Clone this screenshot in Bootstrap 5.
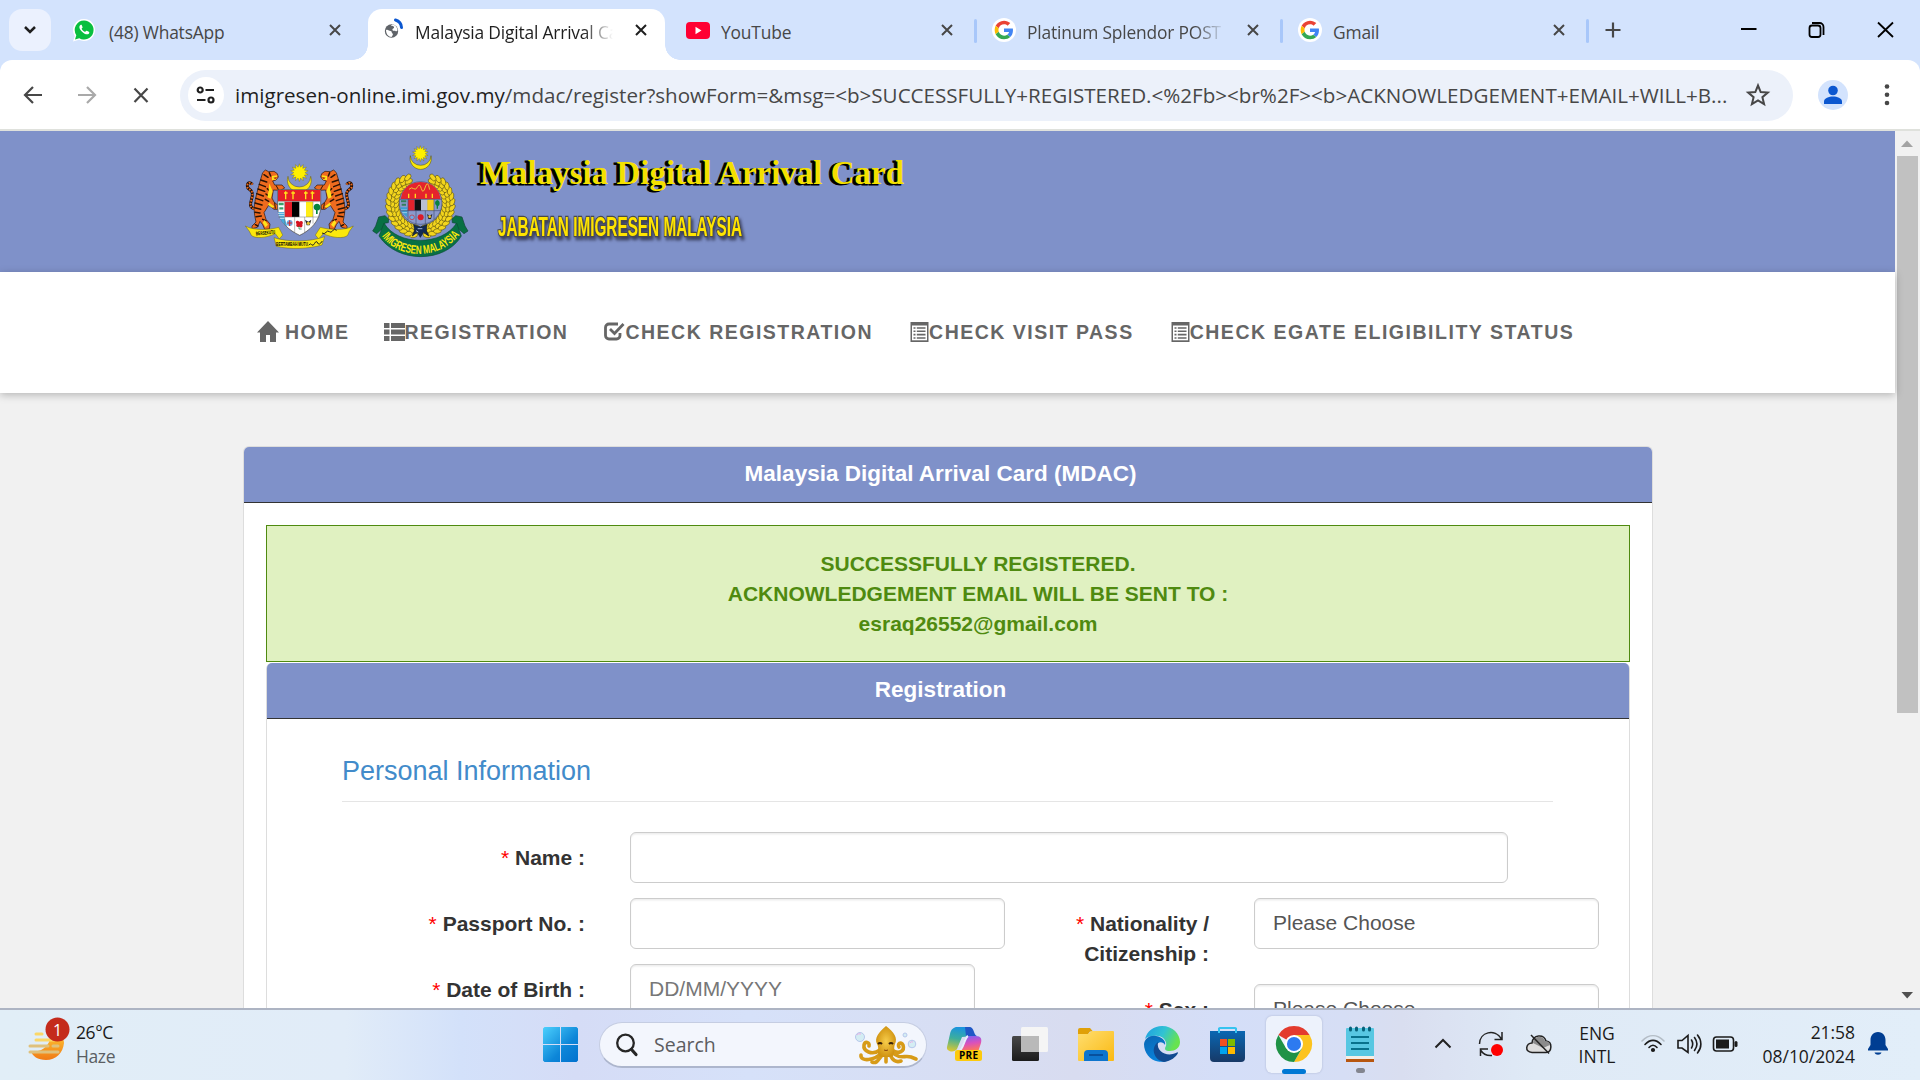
<!DOCTYPE html>
<html lang="en">
<head>
<meta charset="utf-8">
<title>Malaysia Digital Arrival Card</title>
<link href="https://cdn.jsdelivr.net/npm/bootstrap@5.3.0/dist/css/bootstrap.min.css" rel="stylesheet">
<style>
html,body{width:1920px;height:1080px;overflow:hidden;margin:0}
svg{display:block;flex:none;overflow:visible}
.ui{font-family:"Open Sans","Noto Sans",sans-serif}
.strip{height:60px;background:#d3e3fd;padding-left:9px}
.tabdrop{width:42px;height:42px;margin:9px 6px 0 0;border-radius:13px;background:#ebf1fe}
.tabitem{width:306px;height:60px;padding:0 0 0 15px;position:relative;font-size:17.4px;letter-spacing:-.18px;color:#474747}
.tabicon{width:26px;margin-right:11px}
.tabname{width:200px;overflow:hidden;white-space:nowrap;line-height:26px;margin-top:3px}
.fade-end{-webkit-mask-image:linear-gradient(90deg,#000 84%,transparent 99%);mask-image:linear-gradient(90deg,#000 84%,transparent 99%)}
.tabclose{width:24px;margin-left:14px}
.sep::after{content:"";position:absolute;right:-2px;top:19px;width:3px;height:24px;background:#a8c7fa;border-radius:2px}
.tabitem.on{color:#1f1f1f;z-index:1}
.tabshape{position:absolute;left:5px;right:4px;top:9px;bottom:0;background:#fff;border-radius:14px 14px 0 0;z-index:-1}
.tabshape::before,.tabshape::after{content:"";position:absolute;bottom:0;width:15px;height:15px}
.tabshape::before{left:-15px;background:radial-gradient(circle at 0 0,transparent 14.5px,#fff 15px)}
.tabshape::after{right:-15px;background:radial-gradient(circle at 100% 0,transparent 14.5px,#fff 15px)}
.toolwrap{background:#d3e3fd;height:71px}
.tools{height:71px;background:#fff;border-radius:12px 12px 0 0;border-bottom:2px solid #dfe1dc;padding-left:20px}
.omni{width:1613px;height:51px;border-radius:26px;background:#ecf1fa;margin-left:26px;padding:0 23px 0 8px;margin-top:1px}
.siteinfo{width:36px;height:36px;border-radius:50%;background:#fff;margin-right:11px}
.url{font-size:20.6px;color:#474747;white-space:nowrap;line-height:30px;width:1500px;letter-spacing:0}
.url b{font-weight:400;color:#1f1f1f}
.view{height:877px;overflow:hidden;background:#f1f1f1}
.site{width:1895px;font-family:"Liberation Sans",Arial,sans-serif;font-size:21px;line-height:30px;color:#333}
.banner{height:141px;background:#7f91c9;padding:14px 0 0 245px}
.mainnav{height:121px;background:#fff;box-shadow:0 2px 8px rgba(0,0,0,.25);padding:0 0 2px 257px;position:relative;font-weight:700;font-size:19.5px;letter-spacing:1.5px;color:#666}
.mainnav a{color:#666;text-decoration:none;white-space:nowrap;height:30px}
.shell{margin:53px 0 0 243px;width:1410px;border:1px solid #ddd;border-bottom:0;border-radius:6px 6px 0 0;background:#fff;padding-bottom:60px}
.bluehead{height:56px;background:#7f91c9;border-bottom:1.5px solid #333;border-radius:5px 5px 0 0;color:#fff;font-weight:700;font-size:22.5px;line-height:25px;text-align:center;padding:14px 15px 0 0}
.okmsg{margin:22px 22px 0;height:137px;background:#e0f1c1;border:1px solid #4f8a10;color:#4f8a10;font-weight:700;text-align:center;padding:23px 0 0 60px}
.inner{margin:0 22px;border:1px solid #ddd;border-top:0;border-radius:6px 6px 0 0;height:500px;margin-top:1px}
.inner legend{width:1211px;margin:35px 0 0 75px;height:48px;font-size:27px;line-height:34px;color:#428bca;border-bottom:1px solid #e5e5e5;float:none;padding:0}
.lab{font-weight:700;text-align:right;padding-top:11px}
.lab i{font-style:normal;font-weight:400;color:#f00}
.lab-l{width:318px;margin-right:45px}
.lab-r{width:204px;margin-right:45px}
.field{height:51px;border:1.5px solid #ccc;border-radius:6px;background:#fff;box-shadow:inset 0 1.5px 1.5px rgba(0,0,0,.075);color:#555;padding:9px 18px;white-space:nowrap}
.sbar{width:25px;background:#f1f1f1;padding:8px 2px 7px}
.thumb{height:557px;background:#c1c1c1;margin-top:7px}
.taskbar{height:72px;border-top:2px solid #adb4c3;padding-bottom:2px;background:linear-gradient(90deg,#e1eef7 0,#e1ecf8 18%,#d3e1fa 24%,#d5dcf6 30%,#d6e1f9 39%,#d8dcf0 56%,#d4def8 64%,#d6def5 70%,#d9def0 73%,#dfeaf6 80%,#e2eef9 100%);font-size:17.5px;line-height:24px;color:#1b1b1b}
.wtext{margin:-1px 0 0 6px;width:467px;letter-spacing:-.4px}
.searchpill{width:328px;height:46px;margin-left:21px;border-radius:23px;background:#f3f6fd;border:1.5px solid #c5cde2;border-bottom:2px solid #adb6cd;padding:0 9px 0 15px;font-size:19.5px;color:#5c5c60;margin-top:2px}
.tile{width:56px;height:57px;background:#edf2fc;border-radius:6px;box-shadow:0 0 2px rgba(80,90,130,.35);margin-left:20px;position:relative}
.pin{position:relative}
.mark-on{position:absolute;left:16px;bottom:-1px;width:24px;height:5px;border-radius:3px;background:#0078d4}
.mark-off{position:absolute;left:10px;top:42px;width:9px;height:5px;border-radius:3px;background:#83858f}
.lang{width:40px;margin-left:21px;margin-top:2px;text-align:center;line-height:23px}
.clock{width:100px;margin-left:16px;text-align:right;margin-top:-1px;letter-spacing:-.05px}
</style>
<script src="https://cdn.jsdelivr.net/npm/bootstrap@5.3.0/dist/js/bootstrap.bundle.min.js"></script>
</head>
<body>
<svg width="0" height="0" class="position-absolute">
<defs>
<symbol id="x" viewBox="0 0 12 12"><path d="M1 1L11 11M11 1L1 11" stroke="currentColor" stroke-width="2" fill="none"/></symbol>
<symbol id="g" viewBox="0 0 48 48"><circle cx="24" cy="24" r="24" fill="#fff"/><g transform="translate(5.3 5.3) scale(.78)"><path fill="#EA4335" d="M24 9.5c3.54 0 6.71 1.22 9.21 3.6l6.85-6.85C35.9 2.38 30.47 0 24 0 14.62 0 6.51 5.38 2.56 13.22l7.98 6.19C12.43 13.72 17.74 9.5 24 9.5z"/><path fill="#4285F4" d="M46.98 24.55c0-1.57-.15-3.09-.38-4.55H24v9.02h12.94c-.58 2.96-2.26 5.48-4.78 7.18l7.73 6c4.51-4.18 7.09-10.36 7.09-17.65z"/><path fill="#FBBC05" d="M10.53 28.59c-.48-1.45-.76-2.99-.76-4.59s.27-3.14.76-4.59l-7.98-6.19C.92 16.46 0 20.12 0 24c0 3.88.92 7.54 2.56 10.78l7.97-6.19z"/><path fill="#34A853" d="M24 48c6.48 0 11.93-2.13 15.89-5.81l-7.73-6c-2.15 1.45-4.92 2.3-8.16 2.3-6.26 0-11.57-4.22-13.47-9.91l-7.98 6.19C6.51 42.62 14.62 48 24 48z"/></g></symbol>
<symbol id="list" viewBox="0 0 18 20"><path d="M0 0H18V20H0Z" fill="#666"/><path d="M1.500 3.500H16.500V18.300H1.500Z" fill="#fff"/><path d="M3 6H5M3 9.300H5M3 12.600H5M3 16H5M6.300 6H15M6.300 9.300H15M6.300 12.600H15M6.300 16H15" stroke="#666" stroke-width="1.600"/></symbol>
</defs></svg>

<header class="ui">
<div class="strip d-flex">
  <div class="tabdrop d-flex align-items-center justify-content-center"><svg width="12" height="8" viewBox="0 0 12 8"><path d="M1 1L6 6L11 1" stroke="#1f1f1f" stroke-width="2.5" fill="none"/></svg></div>
  <div class="tabitem d-flex align-items-center">
    <div class="tabicon"><svg width="22" height="23" viewBox="-1 0 22 23"><path d="M11 0a11 11 0 1 1-5 20.800L0 22.500L1.800 17A11 11 0 0 1 11 0Z" fill="#fff"/><path d="M11 1.500a9.500 9.500 0 1 1-4.700 17.700L2 20.500L3.300 16.200A9.500 9.500 0 0 1 11 1.500Z" fill="#09bf3f"/><path d="M7.500 6c-2 1.200-1.200 4 1.300 6.500c2.800 2.800 5.600 3.600 7 2.200c.6-.8.7-1.700 0-2l-2-1c-1-.3-1.200 1.400-2 1.100c-1.500-.6-2.600-1.700-3.100-3.100c0-.7 1-.9.9-1.500L8.700 6c-.2-.4-.7-.3-1.200 0Z" fill="#fff"/></svg></div>
    <div class="tabname">(48) WhatsApp</div><div class="tabclose d-flex justify-content-center"><svg width="12" height="12"><use href="#x"/></svg></div>
  </div>
  <div class="tabitem on d-flex align-items-center"><div class="tabshape"></div>
    <div class="tabicon"><svg width="18" height="20" viewBox="-7 1 18 20"><circle cx="6.500" cy="12" r="6.700" fill="#5f6368"/><path d="M1 11c2-1 3 1 4.500 1s1 2 2 2.500s0 2-1 3.500c-3 0-5.500-3-5.500-7ZM6 6.500c1 1 2.500 0 3 1.500s-2 1.500-1.500 3 2.500 0 3.500 1.500l1.500-1c0-3-2-5.500-5-6Z" fill="#fff"/><path d="M10.500 1C14 2 16.300 5 16.500 8.500" stroke="#0b57d0" stroke-width="3" fill="none" stroke-linecap="round"/></svg></div>
    <div class="tabname fade-end">Malaysia Digital Arrival Card</div><div class="tabclose d-flex justify-content-center"><svg width="12" height="12"><use href="#x"/></svg></div>
  </div>
  <div class="tabitem sep d-flex align-items-center">
    <div class="tabicon"><svg width="24" height="17" viewBox="-2 0 24 17"><rect width="24" height="17" rx="4" fill="#f03"/><path d="M9.500 4.800L15.500 8.500L9.500 12.200Z" fill="#fff"/></svg></div>
    <div class="tabname">YouTube</div><div class="tabclose d-flex justify-content-center"><svg width="12" height="12"><use href="#x"/></svg></div>
  </div>
  <div class="tabitem sep d-flex align-items-center">
    <div class="tabicon"><svg width="26" height="24"><use href="#g" x="2" width="24" height="24"/></svg></div>
    <div class="tabname fade-end">Platinum Splendor POST</div><div class="tabclose d-flex justify-content-center"><svg width="12" height="12"><use href="#x"/></svg></div>
  </div>
  <div class="tabitem sep d-flex align-items-center">
    <div class="tabicon"><svg width="26" height="24"><use href="#g" x="2" width="24" height="24"/></svg></div>
    <div class="tabname">Gmail</div><div class="tabclose d-flex justify-content-center"><svg width="12" height="12"><use href="#x"/></svg></div>
  </div>
  <svg width="333" height="60" viewBox="1587 0 333 60" fill="none"><path d="M1605.500 30H1620.500M1613 22.500V37.500" stroke="#474747" stroke-width="2.200"/><path d="M1741 29H1756.500M1878 22.500L1893 37M1893 22.500L1878 37" stroke="#000" stroke-width="1.800"/><rect x="1809.500" y="25.500" width="11" height="11.500" rx="2.500" stroke="#000" stroke-width="1.800"/><path d="M1812 23h7.500a4 4 0 0 1 4 4v8" stroke="#000" stroke-width="1.800"/></svg>
</div>
<div class="toolwrap"><div class="tools d-flex align-items-center">
  <svg width="134" height="30" viewBox="20 79 134 30" fill="none" stroke-width="2.200"><path d="M42 94H25.500M33 86L25 94L33 102" stroke="#474747"/><path d="M78 94H94.500M87 86L95 94L87 102" stroke="#a9a9a9"/><path d="M134.500 87.500L147.500 101M147.500 87.500L134.500 101" stroke="#474747"/></svg>
  <div class="omni d-flex align-items-center">
    <div class="siteinfo d-flex align-items-center justify-content-center"><svg width="20" height="18" viewBox="0 0 20 18" fill="none" stroke="#1f1f1f" stroke-width="2.200"><circle cx="4.200" cy="4" r="2.500"/><path d="M9.500 4H18M1 14H9.500"/><circle cx="15" cy="14" r="2.500"/></svg></div>
    <div class="url"><b>imigresen-online.imi.gov.my</b>/mdac/register?showForm=&amp;msg=&lt;b&gt;SUCCESSFULLY+REGISTERED.&lt;%2Fb&gt;&lt;br%2F&gt;&lt;b&gt;ACKNOWLEDGEMENT+EMAIL+WILL+B...</div>
    <svg class="ms-auto" width="24" height="24" viewBox="0 0 24 24"><path d="M12 2.500L14.700 9.100L21.800 9.600L16.400 14.200L18.100 21.200L12 17.400L5.900 21.200L7.600 14.200L2.200 9.600L9.300 9.100Z" fill="none" stroke="#474747" stroke-width="2"/></svg>
  </div>
  <svg width="120" height="40" viewBox="1793 75 120 40"><circle cx="1833" cy="95" r="15" fill="#d3e3fd"/><circle cx="1833" cy="90.500" r="4.800" fill="#0b57d0"/><path d="M1824 104v-2.500c0-3.500 5-5 9-5s9 1.500 9 5v2.500Z" fill="#0b57d0"/><g fill="#474747"><circle cx="1887" cy="86.500" r="2.300"/><circle cx="1887" cy="94.700" r="2.300"/><circle cx="1887" cy="103" r="2.300"/></g></svg>
</div></div>
</header>

<div class="view d-flex">
<main class="site">
  <div class="banner d-flex">
    <svg width="225" height="112" viewBox="45 45 675 336">
      <defs>
        <g id="tiger" stroke-linejoin="round">
          <path d="M72 236C50 230 70 206 67 190C65 176 52 180 52 168C52 155 63 156 67 164" fill="none" stroke="#1d0d04" stroke-width="9"/>
          <path d="M72 236C50 230 70 206 67 190C65 176 52 180 52 168C52 155 63 156 67 164" fill="none" stroke="#ef6a1c" stroke-width="6" stroke-dasharray="5 4"/>
          <path d="M98 128L106 120L116 125L132 124L142 131L145 141L138 150L128 153L134 165L156 165L164 174L152 181L130 180L126 204L132 216L144 226L143 238L132 238L116 226L102 248L108 268L120 282L118 297L104 298L98 284L90 274L82 292L66 296L66 288L78 276L74 256L72 236L76 208L84 176L92 148Z" fill="#ee6b1f" stroke="#2a1204" stroke-width="2"/>
          <path d="M92 150L110 156M88 163L106 170M84 177L104 184M80 191L100 198M78 205L98 212M75 219L96 225M74 233L92 238M75 247L90 249M78 260L94 258M102 134L114 142M118 128L122 138M112 176L120 184M108 192L118 200M106 208L116 214M98 268L108 272M76 284L84 288" stroke="#2a1204" stroke-width="4.500" stroke-linecap="round"/>
          <path d="M118 160L128 184L122 206L112 202L116 182ZM126 138L142 136L138 149L126 150ZM104 270L114 284L106 292L98 278ZM118 218L134 230L126 233L114 224Z" fill="#ffe21a"/>
          <path d="M130 143L141 141L136 148Z" fill="#b01c10"/><path d="M138 166L146 180M134 218L136 236" stroke="#2a1204" stroke-width="3"/>
        </g>
      </defs>
      <use href="#tiger"/><use href="#tiger" transform="matrix(-1 0 0 1 417 0)"/>
      <path d="M174 139A36 36 0 1 0 242 139A34 32 0 1 1 174 139Z" fill="#fbe80c" stroke="#6b5a00" stroke-width="1.500"/>
      <polygon class="sun" data-x="208" data-y="128" data-r="27" fill="#fff000" stroke="#695c09"/>
      <path d="M143 179H272V228C272 275 237 303 209 316C179 302 143 276 143 228Z" fill="#fff" stroke="#403d3a" stroke-width="2"/>
      <path d="M144 180H271V214H144Z" fill="#e51e28"/><g stroke="#ffe21a" stroke-width="4"><path d="M167 184V208M189 184V208M227 184V208M247 184V208M162 189H173M184 189H195M222 189H233M242 189H253"/></g>
      <path d="M164 215H186V261H164Z" fill="#e51e28"/><path d="M186 215H208V261H186Z" fill="#000"/><path d="M228 215H249V261H228Z" fill="#ffed16"/>
      <path d="M145 246H163V261L172 289C158 282 148 266 145 246Z" fill="#44a9dd"/><path d="M144 250h20M146 257h18M150 265h16" stroke="#fff" stroke-width="2"/><path d="M146 222h15M148 235h12" stroke="#38a26c" stroke-width="7"/>
      <path d="M261 221c13 0 13 20 2 20v11h-5v-11c-11-4-8-20 3-20Z" fill="#07833d"/>
      <path d="M144 215H271M144 261H268M164 215V286M249 215V281M194 261V308M224 261V308" stroke="#777" stroke-width="1.500" fill="none"/>
      <circle cx="179" cy="279" r="9" fill="#6cabe8"/><path d="M172 279h14M179 271v17" stroke="#d82828" stroke-width="3"/>
      <path d="M208 275c7-6 14 1 9 8c3 9-5 12-9 7c-7 4-12-3-8-8c-6-7 2-14 8-7Z" fill="#d5111f"/><path d="M207 288v9h8" stroke="#07833d" stroke-width="2" fill="none"/>
      <path d="M225 269l10 6l9-6l-5 17h-9Z" fill="#27262a"/><circle cx="235" cy="280" r="5" fill="#e8c32f"/>
      <path d="M46 288C70 302 119 300 146 292L158 315L148 327L136 311C110 324 75 327 64 316L58 304ZM370 288C346 302 298 300 271 292L256 315L266 327L280 311C307 324 342 327 353 316L358 304Z" fill="#fbe80c" stroke="#6e6614" stroke-width="1.500"/>
      <path d="M132 323C176 337 240 336 284 320L276 345C238 357 178 359 139 349Z" fill="#fbe80c" stroke="#6e6614" stroke-width="1.500"/>
      <text x="78" y="314" font-size="16" font-weight="700" textLength="58" lengthAdjust="spacingAndGlyphs" font-family="Liberation Sans" transform="rotate(-6 105 312)">BERSEKUTU</text>
      <text x="138" y="348" font-size="18" font-weight="700" textLength="96" lengthAdjust="spacingAndGlyphs" font-family="Liberation Sans">BERTAMBAH MUTU</text>
      <path d="M236 346q5-8 9-2t9-4t9-1t14-6M276 309q7 5 12-2t10-2t10-3t12-1" stroke="#222" stroke-width="3" fill="none"/>

      <path d="M541 77A32 33 0 1 0 603 77A31 29 0 1 1 541 77Z" fill="#fbe80c" stroke="#555000" stroke-width="1.500"/>
      <polygon class="sun" data-x="571" data-y="71" data-r="24" fill="#fff000" stroke="#695c09"/>
      <g id="wreath"></g>
      <circle cx="572" cy="219" r="64" fill="#8a99cc" stroke="#4d5676" stroke-width="2"/>
      <path d="M517 188A63 63 0 0 1 627 188L632 207H512Z" fill="#e5232c"/>
      <path d="M537 178q8-8 14-2t12-6t11 6t12-5t13 8" stroke="#edc437" stroke-width="3" fill="none"/>
      <g stroke="#ffda19" stroke-width="4"><path d="M536 191V204M556 191V204M588 191V204M607 191V204"/></g>
      <path d="M534 208H554V242H534Z" fill="#e5232c"/><path d="M554 208H573V242H554Z" fill="#111"/><path d="M573 208H592V242H573Z" fill="#b9bfd1"/><path d="M592 208H612V242H592Z" fill="#f6cc18"/>
      <path d="M511 232H532V262C518 253 512 240 511 232Z" fill="#3b9ed4"/><path d="M513 214h16M515 224h13" stroke="#32805b" stroke-width="6"/><path d="M513 240h18M517 248h14" stroke="#cde5f4" stroke-width="2"/><path d="M622 210c9 2 9 17 2 18v8h-4v-9c-7-4-6-15 2-17Z" fill="#0a8140"/>
      <path d="M509 208H636M512 242H633M534 208V270M612 208V268M558 242V282M586 242V282" stroke="#444f74" stroke-width="2"/>
      <circle cx="546" cy="262" r="7" fill="#6cabe8" stroke="#d82828" stroke-width="2"/><circle cx="572" cy="262" r="9" fill="#db1b29"/><path d="M591 252l8 5l8-5l-4 15h-8Z" fill="#28262c"/><circle cx="599" cy="260" r="4" fill="#e8c32f"/>
      <path d="M551 284L571 291L591 284L589 301L596 318L580 307L571 322L562 307L547 318L554 301Z" fill="#122a54" stroke="#091525" stroke-width="2"/><path d="M563 296h14M558 302l7 4" stroke="#9fb1d4" stroke-width="3"/>
      <path d="M446 261L465 257L476 267L475 278L463 280L458 295L440 311L428 303L437 288ZM696 261L677 257L666 267L667 278L679 280L684 295L702 311L714 303L705 288Z" fill="#087044" stroke="#124638" stroke-width="2"/>
      <path d="M462 279C502 349 638 348 680 279L694 318C646 400 501 401 447 318Z" fill="#087044" stroke="#0a4e37" stroke-width="2"/>
      <path id="arc" d="M455 318C509 393 637 390 695 306" fill="none"/>
      <text font-family="Liberation Sans" font-size="36" font-weight="700" fill="#fbe80c"><textPath href="#arc" textLength="268" lengthAdjust="spacingAndGlyphs">IMIGRESEN MALAYSIA</textPath></text>
    </svg>
    <svg width="440" height="112" viewBox="470 145 440 112">
      <g font-family="Liberation Serif" font-weight="700" font-size="34"><text x="477" y="184.500" textLength="424" lengthAdjust="spacingAndGlyphs" stroke="#000" stroke-width="1">Malaysia Digital Arrival Card</text><text x="480" y="183.500" textLength="424" lengthAdjust="spacingAndGlyphs" fill="#f4e000" aria-hidden="true">Malaysia Digital Arrival Card</text></g>
      <text x="498" y="236" textLength="244" lengthAdjust="spacingAndGlyphs" font-family="Liberation Sans" font-weight="700" font-size="27" fill="#ffe400" stroke="#4a4a4a" stroke-width="2.500" paint-order="stroke" style="filter:drop-shadow(2px 3px 1.5px rgba(30,30,50,.7))">JABATAN IMIGRESEN MALAYSIA</text>
    </svg>
  </div>
  <nav class="mainnav d-flex align-items-center">
    <a class="d-flex align-items-center" style="margin-right:34px"><svg width="22" height="21" viewBox="0 0 22 21" class="me-1"><path d="M11 0L22 11.500H19V21H13V14H9V21H3V11.500H0Z" fill="#666"/></svg><span style="padding-left:2px">HOME</span></a>
    <a class="d-flex align-items-center" style="margin-right:36px"><svg width="21" height="18" viewBox="0 0 21 18"><path d="M0 0H5.500V5H0ZM7 0H21V5H7ZM0 6.500H5.500V11.500H0ZM7 6.500H21V11.500H7ZM0 13H5.500V18H0ZM7 13H21V18H7Z" fill="#666"/></svg>REGISTRATION</a>
    <a class="d-flex align-items-center" style="margin-right:37px"><svg width="21" height="19" viewBox="0 0 21 19" fill="none" stroke="#666" stroke-width="2.800"><path d="M14 2H5A3.500 3.500 0 0 0 1.500 5.500V13.500A3.500 3.500 0 0 0 5 17H12.500A3.500 3.500 0 0 0 16 13.500V11"/><path d="M6 7L10.500 11.500L19.500 2"/></svg>CHECK REGISTRATION</a>
    <a class="d-flex align-items-center" style="margin-right:37px"><svg width="19" height="20" class="ms-0"><use href="#list"/></svg>CHECK VISIT PASS</a>
    <a class="d-flex align-items-center" style="letter-spacing:1.53px"><svg width="19" height="20"><use href="#list"/></svg>CHECK EGATE ELIGIBILITY STATUS</a>
  </nav>
  <section class="shell">
    <div class="bluehead">Malaysia Digital Arrival Card (MDAC)</div>
    <div class="okmsg">SUCCESSFULLY REGISTERED.<br>ACKNOWLEDGEMENT EMAIL WILL BE SENT TO :<br>esraq26552@gmail.com</div>
    <div class="inner">
      <div class="bluehead">Registration</div>
      <legend>Personal Information</legend>
      <div class="d-flex" style="margin-top:30px"><div class="lab lab-l"><i>*</i> Name :</div><div class="field" style="width:878px"></div></div>
      <div class="d-flex" style="margin-top:15px">
        <div>
          <div class="d-flex" style="margin-bottom:15px"><div class="lab lab-l"><i>*</i> Passport No. :</div><div class="field" style="width:375px"></div></div>
          <div class="d-flex"><div class="lab lab-l"><i>*</i> Date of Birth :</div><div class="field" style="width:345px;color:#777">DD/MM/YYYY</div></div>
        </div>
        <div>
          <div class="d-flex" style="height:86px"><div class="lab lab-r"><i>*</i> Nationality /<br>Citizenship :</div><div class="field" style="width:345px">Please Choose</div></div>
          <div class="d-flex"><div class="lab lab-r"><i>*</i> Sex :</div><div class="field" style="width:345px">Please Choose</div></div>
        </div>
      </div>
    </div>
  </section>
</main>
<div class="sbar d-flex flex-column align-items-center">
  <svg width="13" height="9" viewBox="0 0 13 9" style="margin-top:1px"><path d="M0 7L6 0.500L12 7Z" fill="#a3a3a3"/></svg>
  <div class="thumb w-100"></div>
  <svg class="mt-auto" width="13" height="9" viewBox="0 0 13 9"><path d="M0.500 0H12L6.200 6.500Z" fill="#505050"/></svg>
</div>
</div>

<footer class="taskbar ui d-flex align-items-center">
  <svg width="48" height="50" viewBox="22 1018 48 50" style="margin-left:22px;margin-top:-2px"><defs><linearGradient id="mo" x2="0" y2="1"><stop stop-color="#ffc533"/><stop offset="1" stop-color="#f07a16"/></linearGradient></defs><path d="M51 1036C60 1030 64 1038 64 1043C63 1053 56 1060 46 1060C38 1060 32 1056 31 1051C42 1053 49 1046 51 1036Z" fill="url(#mo)"/><g stroke-linecap="round" stroke-width="3"><path d="M36 1034H42M36 1040H54" stroke="#fbd768"/><path d="M30 1046H48M53 1046H58M30 1052H58" stroke="#dfc17c"/></g><circle cx="57.500" cy="1029.500" r="12" fill="#c42b1c"/><text x="57.500" y="1035.500" text-anchor="middle" font-size="16" fill="#fff">1</text></svg>
  <div class="wtext"><div>26°C</div><div style="color:#5b5e63">Haze</div></div>
  <svg width="35" height="35" viewBox="0 0 35 35"><defs><linearGradient id="wi" x2="1" y2="1"><stop stop-color="#4cd0fd"/><stop offset=".6" stop-color="#0d86d8"/><stop offset="1" stop-color="#0171ce"/></linearGradient></defs><path d="M1.500 0H17V17H0V1.500ZM18 0H33.500L35 1.500V17H18ZM0 18H17V35H1.500L0 33.500ZM18 18H35V33.500L33.500 35H18Z" fill="url(#wi)"/></svg>
  <div class="searchpill d-flex align-items-center"><svg width="24" height="24" viewBox="0 0 24 24" style="margin-right:15px" fill="none" stroke="#262626"><circle cx="10.500" cy="10" r="8.300" stroke-width="2.300"/><path d="M16.500 16.500L21 21.500" stroke-width="3.200" stroke-linecap="round"/></svg>Search
    <svg class="ms-auto" width="62" height="40" viewBox="855 1025 62 40"><defs><radialGradient id="oc"><stop stop-color="#f7cd4b"/><stop offset="1" stop-color="#d19412"/></radialGradient></defs><g fill="none" stroke="#d79b18" stroke-width="3.600" stroke-linecap="round"><path d="M882 1052C875 1061 860 1062 861 1055M880 1050C872 1056 863 1051 864 1045C865 1041 870 1042 869 1046M883 1054C878 1060 877 1064 872 1062M886 1054V1062M890 1054C892 1060 896 1063 901 1061M892 1052C900 1060 904 1055 911 1057L916 1059M892 1050C899 1055 905 1051 903 1045C901 1041 897 1044 899 1047"/></g><path d="M886 1026C894 1032 898 1038 895 1044C893 1049 896 1053 892 1057H880C876 1053 880 1049 877 1044C874 1038 879 1032 886 1026Z" fill="url(#oc)"/><path d="M878 1044q2-2 4 0M889 1044q2-2 4 0" stroke="#39220a" stroke-width="2" fill="none"/><path d="M884 1050q2 1 4 0" stroke="#87440e" fill="none"/><g fill="#d4edf3" stroke="#b7c7ec"><circle cx="860" cy="1037" r="4.500"/><circle cx="905" cy="1035" r="2"/><circle cx="912" cy="1044" r="3.800"/></g><path d="M857 1035q1-2 4-1M910 1043q1-2 3-1" stroke="#edaee6" fill="none"/></svg>
  </div>
  <svg width="36" height="36" viewBox="947 1027 36 36" style="margin-left:20px"><defs><linearGradient id="c1" x1=".3" x2=".1" y2="1"><stop stop-color="#1b94dd"/><stop offset=".45" stop-color="#3dae9c"/><stop offset="1" stop-color="#e4c92a"/></linearGradient><linearGradient id="c2" y1=".1" x2=".2" y2="1"><stop stop-color="#8060f1"/><stop offset=".5" stop-color="#da51bc"/><stop offset="1" stop-color="#ff7658"/></linearGradient></defs><path d="M957 1028H969C973 1028 973 1037 975 1037L962 1038L957 1050C955 1054 946 1053 947 1048L950 1035C951 1030 954 1028 957 1028Z" fill="url(#c1)"/><path d="M965 1028H970C974 1028 974 1037 977 1037H966Z" fill="#2057c6"/><path d="M968 1037H976C981 1037 982 1040 981 1044L978 1053H958C964 1052 963 1037 968 1037Z" fill="url(#c2)"/><path d="M968 1037C964 1039 964 1051 958 1053" stroke="#e8effb" stroke-width="2" fill="none"/><rect x="955" y="1051" width="27" height="11" rx="2.500" fill="#fcca0d"/><text x="968.500" y="1060.200" text-anchor="middle" font-size="10" font-weight="700" textLength="19">PRE</text></svg>
  <svg width="37" height="36" viewBox="1012 1026 37 36" style="margin-left:29px"><defs><linearGradient id="tv" x2="0" y2="1"><stop stop-color="#484848"/><stop offset="1" stop-color="#1b1b1b"/></linearGradient></defs><rect x="1012" y="1036" width="27" height="25" rx="1.500" fill="url(#tv)"/><rect x="1021" y="1027" width="27" height="25" rx="1.500" fill="#f5f5f5"/><rect x="1021" y="1036" width="18" height="16" fill="#b9b9b9"/></svg>
  <svg width="36" height="36" viewBox="1078 1026 36 36" style="margin-left:29px"><defs><linearGradient id="fo" x2="1" y2="1"><stop stop-color="#ffde70"/><stop offset="1" stop-color="#fab912"/></linearGradient></defs><path d="M1078 1030q0-2 2-2h10l3 3.500h-3l-3 4h-9Z" fill="#e0a008"/><path d="M1078 1034h10l4-3h21q1 0 1 1v28q0 1-1 1h-34q-1 0-1-1Z" fill="url(#fo)"/><path d="M1084 1061v-7q0-4 4-4h16q4 0 4 4v7Z" fill="#0e75cd"/><path d="M1089 1055h14" stroke="#084c98" stroke-width="1.800"/></svg>
  <svg width="36" height="36" viewBox="0 0 36 36" style="margin-left:30px"><defs><linearGradient id="e1" y1="0" x2="1" y2=".4"><stop stop-color="#1d9de2"/><stop offset=".55" stop-color="#31c3d3"/><stop offset="1" stop-color="#67e34f"/></linearGradient><linearGradient id="e2" x2=".4" y2="1"><stop stop-color="#0a66b3"/><stop offset="1" stop-color="#0983db"/></linearGradient></defs><path d="M1 13C3 5 10 0 18 0C29 0 36 8 36 16C36 22 31 25 26 25C21 25 20 23 22 20C23 17 21 11 14 10C8 9 3 11 1 13Z" fill="url(#e1)"/><path d="M0 18C1 12 6 9 12 10C19 11 22 16 21 19C19 15 13 15 12 21C11 28 17 34 25 34C22 36 17 36 14 35.500C6 34 0 27 0 18Z" fill="url(#e2)"/><path d="M14 16C6 22 10 34 20 36C27 35 32 31 34 27C34 26 33 26 32 27C23 31 12 26 14 16Z" fill="#114a90"/></svg>
  <svg width="36" height="36" viewBox="1210 1026 36 36" style="margin-left:30px"><defs><linearGradient id="st" x2="0" y2="1"><stop stop-color="#0a67b2"/><stop offset="1" stop-color="#173967"/></linearGradient></defs><path d="M1219 1033v-4q0-1 1-1h15q1 0 1 1v4" fill="none" stroke="#35c3f0" stroke-width="2"/><path d="M1210 1031h35v27q0 4-4 4h-27q-4 0-4-4Z" fill="url(#st)"/><path d="M1219 1028v5M1236 1028v5" stroke="#35c3f0" stroke-width="2"/><path d="M1220 1039h7v7h-7Z" fill="#f25022"/><path d="M1228 1039h7v7h-7Z" fill="#7fba00"/><path d="M1220 1047h7v7h-7Z" fill="#00a4ef"/><path d="M1228 1047h7v7h-7Z" fill="#ffb900"/></svg>
  <div class="tile d-flex justify-content-center align-items-center"><svg width="36" height="36" viewBox="0 0 48 48"><path d="M24 24L3.200 12A24 24 0 0 1 44.800 12H24Z" fill="#e33b2e"/><path d="M24 12H44.800A24 24 0 0 1 24 48L34.400 30Z" fill="#fcc31e"/><path d="M3.200 12L13.600 30L34.400 30L24 48A24 24 0 0 1 3.200 12Z" fill="#1f9246"/><circle cx="24" cy="24" r="12" fill="#fff"/><circle cx="24" cy="24" r="9.400" fill="#2d7af0"/></svg><span class="mark-on"></span></div>
  <div class="pin" style="margin-left:24px"><svg width="28" height="36" viewBox="0 0 28 36"><path d="M0 31H28V36H0Z" fill="#b75610"/><path d="M0 29H28V33H0Z" fill="#f4eee6"/><path d="M1 2H27Q28 2 28 3V30H0V3Q0 2 1 2Z" fill="#57c7e2"/><path d="M5 11H23M5 17H23M5 23H23" stroke="#07718c" stroke-width="2"/><path d="M4.500 2V4M10.500 2V4M17.500 2V4M23.500 2V4" stroke="#07627b" stroke-width="3" stroke-linecap="round"/></svg><span class="mark-off"></span></div>
  <svg width="126" height="36" viewBox="1430 1026 126 36" style="margin-left:56px" fill="none"><path d="M1435.500 1047.500L1443 1040L1450.500 1047.500" stroke="#222" stroke-width="2"/><path d="M1479.500 1044C1479.500 1032 1495 1028 1501.500 1039M1502 1032V1039.500H1494.500M1480.500 1056V1049H1488M1480.500 1050C1483 1054 1487 1056 1492 1055.500" stroke="#222" stroke-width="1.500"/><circle cx="1497" cy="1050" r="6" fill="#f00"/><path d="M1532 1052.500C1524 1052 1526 1043 1532 1043C1533 1034 1544 1034 1546 1041C1553 1042 1552 1052 1546 1052.500Z" fill="#ddd" stroke="#222" stroke-width="1.500"/><path d="M1533 1043C1534 1035 1543 1035 1545 1041C1548 1041 1550 1043 1550 1045L1543 1048Z" fill="#8b8b8b"/><path d="M1531 1035L1549 1053.500" stroke="#222" stroke-width="1.500"/></svg>
  <div class="lang">ENG<br>INTL</div>
  <svg width="98" height="24" viewBox="1641 1032 98 24" style="margin-left:24px" fill="none" stroke="#1b1b1b" stroke-width="1.600" stroke-linecap="round"><path d="M1642 1041C1649 1034 1657 1034 1664 1041" stroke="#b4bdc6"/><path d="M1645 1044.500C1650 1039 1656 1039 1661 1044.500M1649 1047.500C1651.500 1044.500 1654.500 1044.500 1657 1047.500"/><circle cx="1653" cy="1050" r="1.300" fill="#1b1b1b"/><path d="M1678 1040.500H1682L1688 1035.500V1052.500L1682 1048H1678ZM1691.500 1040C1693 1042.500 1693 1045.500 1691.500 1048M1694.500 1037.500C1697.500 1041.500 1697.500 1046.500 1694.500 1050.500M1697.500 1035C1702 1040.500 1702 1047.500 1697.500 1053"/><rect x="1713.500" y="1037" width="20" height="14" rx="3"/><rect x="1716.500" y="1040" width="12" height="8" fill="#1b1b1b" stroke-width="1"/><path d="M1736 1042.500v3" stroke-width="3"/></svg>
  <div class="clock">21:58<br>08/10/2024</div>
  <svg width="20" height="24" viewBox="0 0 20 24" style="margin-left:13px"><path d="M10 0C5 0 2.500 4 2.500 8V13L0 17V18.500H20V17L17.500 13V8C17.500 4 15 0 10 0ZM6.500 20.500H13.500C12.500 23.500 7.500 23.500 6.500 20.500Z" fill="#003e92"/></svg>
</footer>
<script>
// many-pointed stars above the two crests
document.querySelectorAll('.sun').forEach(function(s){
  var x=+s.dataset.x,y=+s.dataset.y,r=+s.dataset.r,p=[];
  for(var i=0;i<28;i++){var q=i%2?r*.62:r,a=i*Math.PI/14-Math.PI/2;p.push((x+q*Math.cos(a)).toFixed(1)+','+(y+q*Math.sin(a)).toFixed(1));}
  s.setAttribute('points',p.join(' '));
});
// rice-ear wreath, three rows of leaves on each side
var w='';
for(var side=-1;side<2;side+=2)for(var i=0;i<15;i++)for(var k=0;k<3;k++){
  var a=(82-i*10.2-k*2)*Math.PI/180,r=[72,84,96][k]-(i>12?(i-12)*4:0),x=571+side*r*Math.cos(a),y=222+r*Math.sin(a);
  var deg=Math.atan2(-Math.cos(a),side*Math.sin(a))*180/Math.PI+side*[-25,0,25][k];
  w+='<ellipse cx="'+x.toFixed(1)+'" cy="'+y.toFixed(1)+'" rx="12" ry="7" fill="#f3d51d" stroke="#4d4612" stroke-width="1.6" transform="rotate('+deg.toFixed(0)+' '+x.toFixed(1)+' '+y.toFixed(1)+')"/>';
}
document.getElementById('wreath').innerHTML=w;
</script>
</body>
</html>
